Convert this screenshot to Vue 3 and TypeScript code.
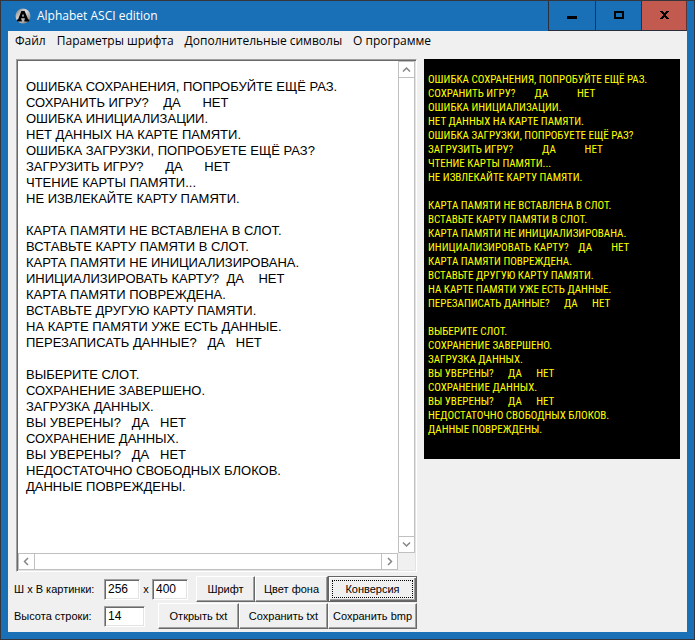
<script setup lang="ts">
import { computed, ref } from 'vue'

const menu: string[] = ['Файл', 'Параметры шрифта', 'Дополнительные символы', 'О программе']

const source = ref<string>(
  [
    '',
    'ОШИБКА СОХРАНЕНИЯ, ПОПРОБУЙТЕ ЕЩЁ РАЗ.',
    'СОХРАНИТЬ ИГРУ?    ДА      НЕТ',
    'ОШИБКА ИНИЦИАЛИЗАЦИИ.',
    'НЕТ ДАННЫХ НА КАРТЕ ПАМЯТИ.',
    'ОШИБКА ЗАГРУЗКИ, ПОПРОБУЕТЕ ЕЩЁ РАЗ?',
    'ЗАГРУЗИТЬ ИГРУ?      ДА      НЕТ',
    'ЧТЕНИЕ КАРТЫ ПАМЯТИ...',
    'НЕ ИЗВЛЕКАЙТЕ КАРТУ ПАМЯТИ.',
    '',
    'КАРТА ПАМЯТИ НЕ ВСТАВЛЕНА В СЛОТ.',
    'ВСТАВЬТЕ КАРТУ ПАМЯТИ В СЛОТ.',
    'КАРТА ПАМЯТИ НЕ ИНИЦИАЛИЗИРОВАНА.',
    'ИНИЦИАЛИЗИРОВАТЬ КАРТУ?  ДА    НЕТ',
    'КАРТА ПАМЯТИ ПОВРЕЖДЕНА.',
    'ВСТАВЬТЕ ДРУГУЮ КАРТУ ПАМЯТИ.',
    'НА КАРТЕ ПАМЯТИ УЖЕ ЕСТЬ ДАННЫЕ.',
    'ПЕРЕЗАПИСАТЬ ДАННЫЕ?   ДА   НЕТ',
    '',
    'ВЫБЕРИТЕ СЛОТ.',
    'СОХРАНЕНИЕ ЗАВЕРШЕНО.',
    'ЗАГРУЗКА ДАННЫХ.',
    'ВЫ УВЕРЕНЫ?   ДА   НЕТ',
    'СОХРАНЕНИЕ ДАННЫХ.',
    'ВЫ УВЕРЕНЫ?   ДА   НЕТ',
    'НЕДОСТАТОЧНО СВОБОДНЫХ БЛОКОВ.',
    'ДАННЫЕ ПОВРЕЖДЕНЫ.',
  ].join('\n'),
)

const imageWidth = ref<string>('256')
const imageHeight = ref<string>('400')
const lineHeight = ref<string>('14')

const previewSize = computed(() => ({
  width: `${imageWidth.value}px`,
  height: `${imageHeight.value}px`,
  lineHeight: `${lineHeight.value}px`,
}))

// Runs of two or more spaces are kept apart: they are set in a fixed-width face.
const previewLines = computed<string[][]>(() =>
  source.value.split('\n').map((line) => line.split(/( {2,})/)),
)
</script>

<template>
  <div class="window">
    <header class="titlebar">
      <svg class="logo" viewBox="0 0 16 16" aria-hidden="true">
        <defs>
          <linearGradient id="ball" x1="0" y1="0" x2="1" y2="1">
            <stop offset="0" stop-color="#777" />
            <stop offset="0.45" stop-color="#ddd" />
            <stop offset="1" stop-color="#666" />
          </linearGradient>
        </defs>
        <circle cx="8" cy="8" r="7.5" fill="url(#ball)" />
        <path d="M6.4 3h3.2l3.6 8.6h1v1.8H9.4v-1.8h.8l-.5-1.4H6.4l-.5 1.4h.9v1.8H2v-1.8h1zM8 5.8L7 8.6h2.1z" fill="#000" fill-rule="evenodd" />
      </svg>
      <h1 class="title">Alphabet ASCI edition</h1>
      <div class="captions">
        <button class="caption minimize" type="button" aria-label="Свернуть">
          <svg viewBox="0 0 10 10"><path d="M0 5h10v3H0z" /></svg>
        </button>
        <button class="caption" type="button" aria-label="Развернуть">
          <svg viewBox="0 0 10 10"><path d="M0 0h10v8H0zM2 2v4h6V2z" fill-rule="evenodd" /></svg>
        </button>
        <button class="caption close" type="button" aria-label="Закрыть">
          <svg viewBox="0 0 10 10"><path d="M1 0h3v1h1v1h1V1h1V0h3v1H9v1H8v1H7v2h1v1h1v1h1v1H7V7H6V6H5v1H4v1H1V7h1V6h1V5h1V3H3V2H2V1H1z" /></svg>
        </button>
      </div>
    </header>

    <div class="client">
      <nav class="menu">
        <button v-for="item in menu" :key="item" class="menu-item" type="button">{{ item }}</button>
      </nav>

      <main class="body">
        <section class="left">
          <div class="memo">
            <textarea v-model="source" class="memo-text" aria-label="Текст" wrap="off" spellcheck="false"></textarea>
            <div class="bar vertical">
              <button type="button" aria-label="Вверх"><svg viewBox="0 0 9 9"><path d="M1 6.5L4.5 3L8 6.5" /></svg></button>
              <button type="button" aria-label="Вниз"><svg viewBox="0 0 9 9"><path d="M1 2.5L4.5 6L8 2.5" /></svg></button>
            </div>
            <div class="bar horizontal">
              <button type="button" aria-label="Влево"><svg viewBox="0 0 9 9"><path d="M6 1L2.5 4.5L6 8" /></svg></button>
              <button type="button" aria-label="Вправо"><svg viewBox="0 0 9 9"><path d="M3 1L6.5 4.5L3 8" /></svg></button>
            </div>
          </div>

          <form class="controls" @submit.prevent>
            <div class="row">
              <label class="name" for="image-width">Ш x В картинки:</label>
              <input id="image-width" v-model="imageWidth" class="field" type="text" />
              <label class="times" for="image-height">x</label>
              <input id="image-height" v-model="imageHeight" class="field" type="text" />
              <div class="buttons">
                <button class="push small" type="button">Шрифт</button>
                <button class="push medium" type="button">Цвет фона</button>
                <button class="push large default" type="submit"><span class="focus">Конверсия</span></button>
              </div>
            </div>
            <div class="row">
              <label class="name" for="line-height">Высота строки:</label>
              <input id="line-height" v-model="lineHeight" class="field wide" type="text" />
              <div class="buttons">
                <button class="push open" type="button">Открыть txt</button>
                <button class="push large" type="button">Сохранить txt</button>
                <button class="push large" type="button">Сохранить bmp</button>
              </div>
            </div>
          </form>
        </section>

        <div class="preview" :style="previewSize">
          <div v-for="(runs, row) in previewLines" :key="row" class="line">
            <span v-for="(run, index) in runs" :key="index" :class="{ space: index % 2 === 1 }">{{ run }}</span>
            <br v-if="runs[0] === ''" />
          </div>
        </div>
      </main>
    </div>
  </div>
</template>

<style>
body {
  margin: 0;
}
</style>

<style scoped>
* {
  box-sizing: border-box;
}

button,
input,
textarea {
  margin: 0;
  padding: 0;
  border: 0;
  border-radius: 0;
  outline: 0;
  font: inherit;
  color: inherit;
}

.window {
  display: flex;
  flex-direction: column;
  min-height: 100vh;
  padding: 0 7px 7px;
  border: 1px solid #34363c;
  background: #1a70b6;
  color: #000;
  font: 11px/16px "Liberation Sans", Arial, sans-serif;
}

.titlebar {
  display: flex;
  align-items: center;
  height: 30px;
  padding-left: 7px;
  color: #fff;
}

.logo {
  width: 16px;
  height: 16px;
}

.title {
  flex: 1;
  margin: 0 0 0 6px;
  font: 12px/16px "Open Sans", "Noto Sans", sans-serif;
}

.captions {
  display: flex;
  align-self: stretch;
}

.caption {
  display: grid;
  place-items: center;
  width: 46px;
  border-left: 1px solid #292f3d;
  border-bottom: 1px solid #292f3d;
  background: #1a70b6;
}

.caption.minimize {
  width: 47px;
}

.caption.close {
  border-right: 1px solid #5c3436;
  background: #c35a50;
}

.caption svg {
  width: 10px;
  height: 10px;
  fill: #000;
}

.client {
  display: flex;
  flex: 1;
  flex-direction: column;
  background: #f0f0f0;
}

.menu {
  display: flex;
  gap: 11px;
  padding: 0 7px;
  font: 12px/20px "Open Sans", "Noto Sans", sans-serif;
}

.menu-item {
  background: none;
}

.body {
  display: grid;
  flex: 1;
  grid-template-columns: minmax(0, 1fr) auto;
  align-items: start;
  gap: 7px;
  padding: 8px 7px 3px 8px;
}

.left {
  display: flex;
  flex-direction: column;
  align-self: stretch;
  gap: 4px;
}

.memo {
  display: grid;
  flex: 1;
  grid-template: minmax(0, 1fr) 17px / minmax(0, 1fr) 17px;
  border: 1px solid;
  border-color: #a0a0a0 #fff #fff #a0a0a0;
  box-shadow: inset 1px 1px #696969, inset -1px -1px #e3e3e3;
  padding: 1px;
}

.memo-text {
  width: 100%;
  height: 100%;
  padding: 2px 8px;
  overflow: hidden;
  resize: none;
  background: #fff;
  font-size: 13px;
  line-height: 16px;
  white-space: pre;
}

.bar {
  display: flex;
  justify-content: space-between;
  border: 1px solid #c0c0c0;
  background: #fff;
}

.bar button {
  display: grid;
  place-items: center;
  width: 16px;
  height: 16px;
  background: #fff;
}

.bar svg {
  width: 9px;
  height: 9px;
  fill: none;
  stroke: #868686;
  stroke-width: 1.5;
}

.vertical {
  flex-direction: column;
}

.vertical button {
  width: 15px;
}

.horizontal button {
  height: 15px;
}

.vertical button:first-child {
  border-bottom: 1px solid #c0c0c0;
}

.vertical button:last-child {
  border-top: 1px solid #c0c0c0;
}

.horizontal button:first-child {
  border-right: 1px solid #c0c0c0;
}

.horizontal button:last-child {
  border-left: 1px solid #c0c0c0;
}

.controls {
  display: flex;
  flex-direction: column;
  gap: 1px;
}

.row {
  display: flex;
  align-items: center;
}

.name {
  width: 90px;
  margin-left: -2px;
  white-space: nowrap;
}

.field {
  width: 36px;
  height: 21px;
  padding: 0 2px 1px 3px;
  border: 1px solid;
  border-color: #a0a0a0 #fff #fff #a0a0a0;
  box-shadow: inset 1px 1px #696969, inset -1px -1px #e3e3e3;
  background: #fff;
  font-size: 12px;
}

.field.wide {
  width: 41px;
}

.times {
  width: 12px;
  text-align: center;
}

.buttons {
  display: flex;
  margin-left: auto;
}

.push {
  height: 26px;
  border: 1px solid;
  border-color: #fff #696969 #696969 #fff;
  box-shadow: inset -1px -1px #a0a0a0;
  background: #f0f0f0;
  text-align: center;
  white-space: nowrap;
}

.small {
  width: 59px;
}

.medium {
  width: 73px;
}

.open {
  width: 81px;
}

.large {
  width: 89px;
}

.default {
  padding: 2px;
  border-color: #646464;
  box-shadow: inset 1px 1px #fff, inset -1px -1px #696969, inset -2px -2px #a0a0a0;
}

.focus {
  display: block;
  margin: 0 1px;
  border: 1px dotted #000;
}

.preview {
  padding: 0 4px;
  overflow: hidden;
  background: #000;
  color: #ff0;
  font-family: "Roboto Condensed", "DejaVu Sans Mono", monospace;
  font-size: 11px;
}

.line span {
  white-space: pre;
}

.line .space {
  font-family: "Liberation Mono", monospace;
  font-size: 8px;
  vertical-align: top;
}
</style>
